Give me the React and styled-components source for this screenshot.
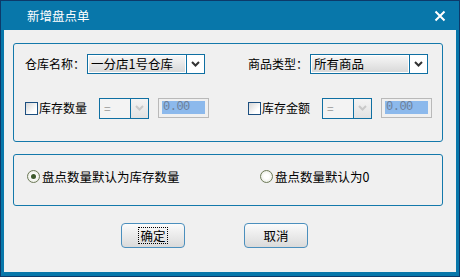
import styled, { createGlobalStyle } from "styled-components";

const GlobalStyle = createGlobalStyle`
  html, body {
    margin: 0;
    padding: 0;
    background: #ffffff;
  }
  * {
    box-sizing: border-box;
  }
`;

const FONT = `"Noto Sans CJK SC", "Liberation Sans", sans-serif`;

const Window = styled.div`
  width: 460px;
  height: 277px;
  display: flex;
  flex-direction: column;
  background: #0877aa;
  border: 1px solid #0c3a6a;
  padding: 0 3px 4px 3px;
  font-family: ${FONT};
  font-size: 12px;
  color: #000;
`;

const TitleBar = styled.div`
  height: 29px;
  display: flex;
  align-items: center;
  justify-content: space-between;
  padding: 0 10px 0 23px;
  color: #ffffff;
  font-size: 12.5px;
`;

const Body = styled.div`
  flex: 1;
  background: #f0f0f0;
  display: flex;
  flex-direction: column;
  padding: 13px 13px 0 9px;
`;

const GroupBox = styled.div`
  height: ${(p) => p.$h}px;
  margin-top: ${(p) => p.$mt || 0}px;
  border: 1px solid #1479ab;
  border-radius: 3px;
  padding: ${(p) => p.$pad};
  display: flex;
  flex-direction: column;
`;

const FieldGrid = styled.div`
  display: grid;
  grid-template-columns: 223px 1fr;
  align-items: center;
  height: 20px;
  margin-top: ${(p) => p.$mt}px;
`;

const Field = styled.div`
  display: flex;
  align-items: center;
  height: 20px;
`;

const Label = styled.span`
  width: ${(p) => p.$w}px;
  white-space: nowrap;
  line-height: 20px;
`;

const Select = styled.div`
  width: 118px;
  height: 20px;
  border: 1px solid #0f6fa2;
  display: flex;
  background: #ffffff;
`;

const SelectText = styled.div`
  flex: 1;
  margin: 1px;
  padding-left: 2px;
  line-height: 16px;
  font-size: 12.5px;
  background: linear-gradient(#f6f6f6, #d9d9d9);
`;

const DropButton = styled.div`
  width: 19px;
  margin: -1px -1px -1px 0;
  border: 1px solid #0f6fa2;
  background: ${(p) => (p.$disabled ? "linear-gradient(#f4f4f4, #e2e2e2)" : "#ffffff")};
  display: flex;
  align-items: center;
  justify-content: center;
`;

const Combo = styled.div`
  width: 50px;
  height: 21px;
  margin-left: ${(p) => p.$ml}px;
  border: 1px solid #0f6fa2;
  display: flex;
  background: #f3f3f3;
`;

const ComboText = styled.div`
  flex: 1;
  padding-left: 4px;
  line-height: 18px;
  color: #9a9a9a;
`;

const NumberBox = styled.div`
  width: 51px;
  height: 20px;
  margin-left: 9px;
  border: 1px solid #b9b9b9;
  background: #f0f0f0;
  padding: 2px 3px 3px 3px;
`;

const Selected = styled.div`
  width: 43px;
  height: 13px;
  background: #8cb9ec;
  color: #6c7f99;
  font-family: "Liberation Mono", monospace;
  font-size: 12px;
  line-height: 13px;
  padding-left: 1px;
  letter-spacing: -0.5px;
`;

const CheckBox = styled.span`
  width: 13px;
  height: 13px;
  border: 1px solid #1c4f80;
  background: linear-gradient(135deg, #d6d6d6, #ffffff 70%);
  margin-right: 1px;
  flex: none;
`;

const RadioRow = styled.div`
  display: grid;
  grid-template-columns: 233px 1fr;
  align-items: center;
`;

const RadioItem = styled.label`
  display: flex;
  align-items: center;
  font-size: 12.5px;
`;

const Radio = styled.span`
  width: 13px;
  height: 13px;
  border-radius: 50%;
  border: 1px solid #6d7a58;
  background: radial-gradient(circle, #ffffff 30%, #dfe3d6 100%);
  display: flex;
  align-items: center;
  justify-content: center;
  margin-right: 2px;
  flex: none;

  &::after {
    content: "";
    width: 5px;
    height: 5px;
    border-radius: 50%;
    background: ${(p) => (p.$checked ? "#3e5a2c" : "transparent")};
  }
`;

const ButtonRow = styled.div`
  display: flex;
  margin-top: 17px;
  padding-left: 108px;
  gap: 59px;
`;

const Button = styled.button`
  width: 64px;
  height: 25px;
  border: 1px solid #4b8fbd;
  border-radius: 4px;
  background: linear-gradient(#fbfbfb, #dadada);
  font-family: ${FONT};
  font-size: 12.5px;
  color: #000;
  padding: 0;
  display: flex;
  align-items: center;
  justify-content: center;
`;

const FocusText = styled.span`
  outline: 1px dotted #000;
  padding: 0 1px;
  line-height: 15px;
`;

const Chevron = ({ disabled }) => (
  <svg width="9" height="6" viewBox="0 0 9 6">
    <path
      d="M1 1 L4.5 4.5 L8 1"
      fill="none"
      stroke={disabled ? "#c9c9c9" : "#333333"}
      strokeWidth="2"
    />
  </svg>
);

const CloseIcon = () => (
  <svg width="12" height="12" viewBox="0 0 12 12">
    <path d="M1.5 1.5 L10.5 10.5 M10.5 1.5 L1.5 10.5" stroke="#ffffff" strokeWidth="2" />
  </svg>
);

const SelectField = ({ label, value }) => (
  <Field>
    <Label $w={62}>{label}</Label>
    <Select>
      <SelectText>{value}</SelectText>
      <DropButton>
        <Chevron />
      </DropButton>
    </Select>
  </Field>
);

const FilterField = ({ label }) => (
  <Field>
    <CheckBox />
    <Label $w={48}>{label}</Label>
    <Combo $ml={12}>
      <ComboText>=</ComboText>
      <DropButton $disabled>
        <Chevron disabled />
      </DropButton>
    </Combo>
    <NumberBox>
      <Selected>0.00</Selected>
    </NumberBox>
  </Field>
);

const App = () => {
  return (
    <>
      <GlobalStyle />
      <Window>
        <TitleBar>
          <span>新增盘点单</span>
          <CloseIcon />
        </TitleBar>
        <Body>
          <GroupBox $h={99} $pad="10px 0 0 11px">
            <FieldGrid $mt={0}>
              <SelectField label="仓库名称：" value="一分店1号仓库" />
              <SelectField label="商品类型：" value="所有商品" />
            </FieldGrid>
            <FieldGrid $mt={24}>
              <FilterField label="库存数量" />
              <FilterField label="库存金额" />
            </FieldGrid>
          </GroupBox>
          <GroupBox $h={52} $mt={12} $pad="12px 0 0 13px">
            <RadioRow>
              <RadioItem>
                <Radio $checked />
                盘点数量默认为库存数量
              </RadioItem>
              <RadioItem>
                <Radio />
                盘点数量默认为0
              </RadioItem>
            </RadioRow>
          </GroupBox>
          <ButtonRow>
            <Button>
              <FocusText>确定</FocusText>
            </Button>
            <Button>取消</Button>
          </ButtonRow>
        </Body>
      </Window>
    </>
  );
};

export default App;
